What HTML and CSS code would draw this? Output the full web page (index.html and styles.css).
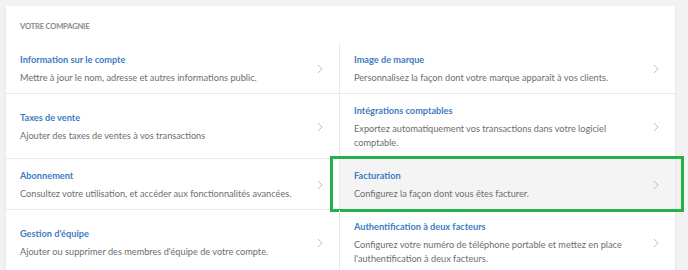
FILE: index.html
```html
<!DOCTYPE html>
<html lang="fr">
<head>
    <meta charset="UTF-8">
    <meta name="viewport" content="width=device-width, initial-scale=1.0">
    <title>Votre compagnie</title>
    <link rel="stylesheet" href="styles.css">
</head>
<body>
    <div class="card">
        <h4 class="card-title">Votre compagnie</h4>
        <div class="settings-grid">
            <a class="setting" href="#">
                <div class="setting-text">
                    <div class="setting-name">Information sur le compte</div>
                    <div class="setting-desc">Mettre à jour le nom, adresse et autres informations public.</div>
                </div>
                <svg class="chevron" width="6" height="10" viewBox="0 0 6 10"><path d="M1 1l4 4-4 4" /></svg>
            </a>
            <a class="setting" href="#">
                <div class="setting-text">
                    <div class="setting-name">Image de marque</div>
                    <div class="setting-desc">Personnalisez la façon dont votre marque apparaît à vos clients.</div>
                </div>
                <svg class="chevron" width="6" height="10" viewBox="0 0 6 10"><path d="M1 1l4 4-4 4" /></svg>
            </a>
            <a class="setting" href="#">
                <div class="setting-text">
                    <div class="setting-name">Taxes de vente</div>
                    <div class="setting-desc">Ajouter des taxes de ventes à vos transactions</div>
                </div>
                <svg class="chevron" width="6" height="10" viewBox="0 0 6 10"><path d="M1 1l4 4-4 4" /></svg>
            </a>
            <a class="setting" href="#">
                <div class="setting-text">
                    <div class="setting-name">Intégrations comptables</div>
                    <div class="setting-desc">Exportez automatiquement vos transactions dans votre logiciel comptable.</div>
                </div>
                <svg class="chevron" width="6" height="10" viewBox="0 0 6 10"><path d="M1 1l4 4-4 4" /></svg>
            </a>
            <a class="setting" href="#">
                <div class="setting-text">
                    <div class="setting-name">Abonnement</div>
                    <div class="setting-desc">Consultez votre utilisation, et accéder aux fonctionnalités avancées.</div>
                </div>
                <svg class="chevron" width="6" height="10" viewBox="0 0 6 10"><path d="M1 1l4 4-4 4" /></svg>
            </a>
            <a class="setting active" href="#">
                <div class="setting-text">
                    <div class="setting-name">Facturation</div>
                    <div class="setting-desc">Configurez la façon dont vous êtes facturer.</div>
                </div>
                <svg class="chevron" width="6" height="10" viewBox="0 0 6 10"><path d="M1 1l4 4-4 4" /></svg>
                <span class="highlight"></span>
            </a>
            <a class="setting" href="#">
                <div class="setting-text">
                    <div class="setting-name">Gestion d'équipe</div>
                    <div class="setting-desc">Ajouter ou supprimer des membres d'équipe de votre compte.</div>
                </div>
                <svg class="chevron" width="6" height="10" viewBox="0 0 6 10"><path d="M1 1l4 4-4 4" /></svg>
            </a>
            <a class="setting" href="#">
                <div class="setting-text">
                    <div class="setting-name">Authentification à deux facteurs</div>
                    <div class="setting-desc">Configurez votre numéro de téléphone portable et mettez en place l'authentification à deux facteurs.</div>
                </div>
                <svg class="chevron" width="6" height="10" viewBox="0 0 6 10"><path d="M1 1l4 4-4 4" /></svg>
            </a>
        </div>
    </div>
</body>
</html>
```

FILE: styles.css
```css
body {
    background-color: #f2f2f2;
    font-family: Lato, Arial, sans-serif;
    margin: 0;
    padding: 6px 13px 0 6px;
    overflow: hidden;
}
.card {
    background-color: #ffffff;
    box-shadow: 0px 1px 3px rgba(0, 0, 0, 0.08);
}
.card-title {
    margin: 0;
    padding: 15px 14px 11px;
    font-size: 7.6px;
    line-height: 11px;
    font-weight: 700;
    color: #8a8a8a;
    text-transform: uppercase;
    letter-spacing: -0.2px;
}
.settings-grid {
    display: grid;
    grid-template-columns: 334px 335px;
}
.setting {
    position: relative;
    display: flex;
    align-items: center;
    padding: 10px 16px 8px 14px;
    border-bottom: 1px solid #e9e9e9;
    text-decoration: none;
}
.setting:nth-child(odd) {
    border-right: 1px solid #e9e9e9;
}
.setting:nth-last-child(-n+2) {
    border-bottom: none;
}
.setting.active {
    background-color: #f4f4f4;
}
.setting-text {
    flex: 1;
    padding-right: 20px;
}
.setting-name {
    font-size: 9.2px;
    line-height: 14px;
    font-weight: 700;
    color: #3d7cc2;
    margin-bottom: 4px;
}
.setting-desc {
    font-size: 9.2px;
    line-height: 14px;
    color: #6e6e6e;
}
.chevron {
    flex-shrink: 0;
    fill: none;
    stroke: #bdbdbd;
    stroke-width: 1;
}
.highlight {
    position: absolute;
    left: -10px;
    right: -9px;
    top: -3px;
    bottom: -3px;
    border: 3px solid #21b24b;
}
```
